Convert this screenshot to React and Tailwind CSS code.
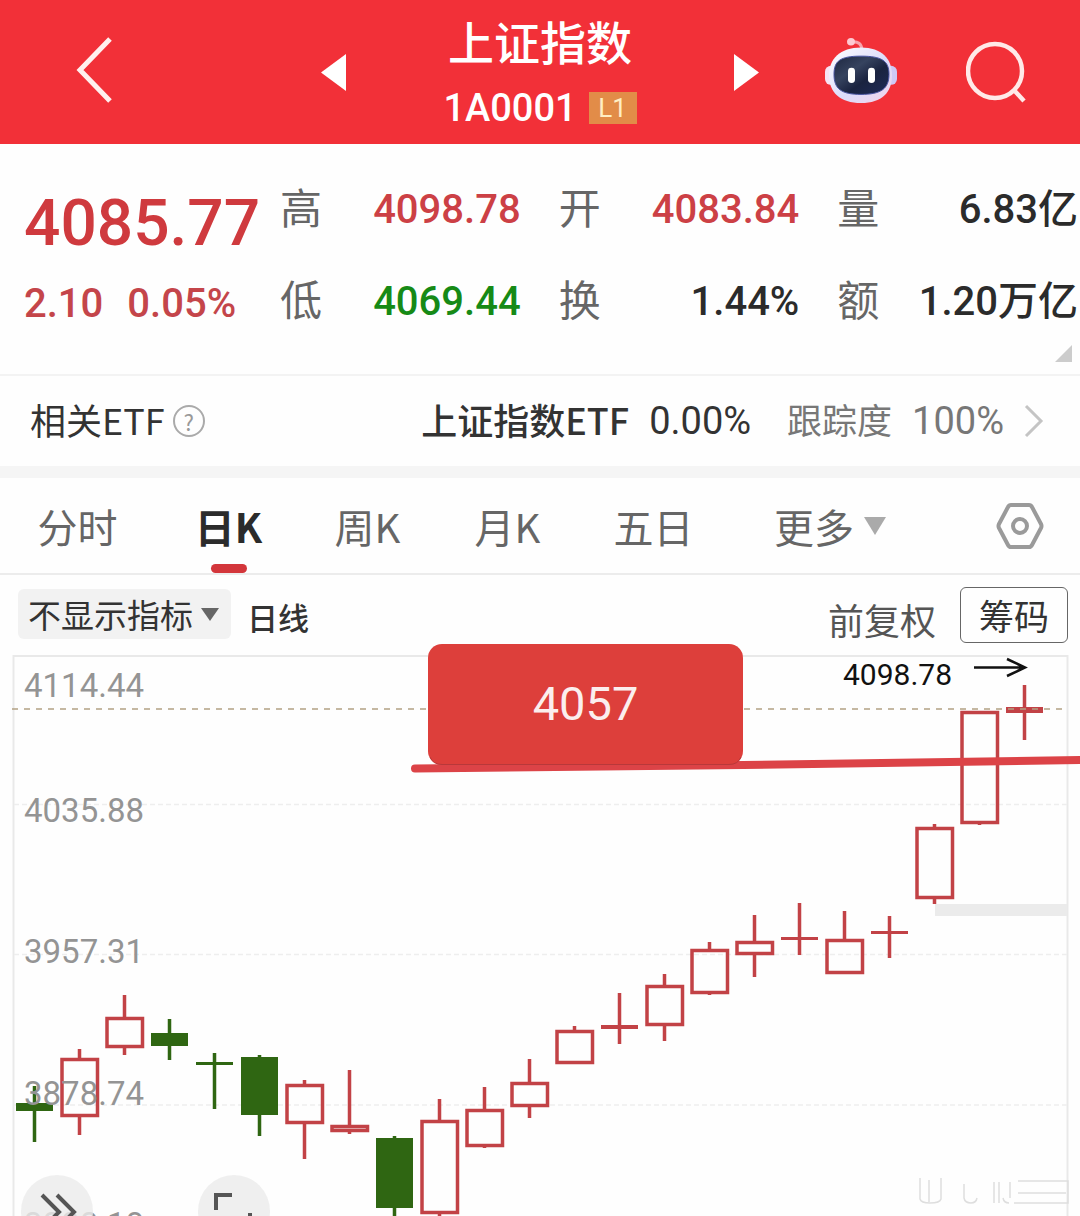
import React from "react";

const NUM = "font-['Roboto','Noto_Sans_CJK_SC',sans-serif]";

const RED = "#c24246";
const GREEN = "#2f6612";

// kind: hollow (rising body), solid (falling body), line (flat body)
const candles = [
  { kind: "solid", top: 1103, bottom: 1111, high: 1086, low: 1142 },
  { kind: "hollow", top: 1058, bottom: 1117, high: 1049, low: 1135 },
  { kind: "hollow", top: 1017, bottom: 1048, high: 995, low: 1055 },
  { kind: "solid", top: 1033, bottom: 1046, high: 1019, low: 1060 },
  { kind: "solid", top: 1062, bottom: 1065, high: 1053, low: 1109 },
  { kind: "solid", top: 1057, bottom: 1115, high: 1055, low: 1136 },
  { kind: "hollow", top: 1084, bottom: 1124, high: 1080, low: 1159 },
  { kind: "hollow", top: 1125, bottom: 1132, high: 1070, low: 1134 },
  { kind: "solid", top: 1138, bottom: 1208, high: 1136, low: 1216 },
  { kind: "hollow", top: 1120, bottom: 1214, high: 1099, low: 1216 },
  { kind: "hollow", top: 1109, bottom: 1147, high: 1087, low: 1148 },
  { kind: "hollow", top: 1082, bottom: 1107, high: 1059, low: 1118 },
  { kind: "hollow", top: 1030, bottom: 1064, high: 1026, low: 1064 },
  { kind: "line", top: 1025, bottom: 1029, high: 993, low: 1044 },
  { kind: "hollow", top: 985, bottom: 1026, high: 974, low: 1041 },
  { kind: "hollow", top: 949, bottom: 994, high: 942, low: 995 },
  { kind: "hollow", top: 941, bottom: 955, high: 915, low: 977 },
  { kind: "line", top: 937, bottom: 940, high: 903, low: 955 },
  { kind: "hollow", top: 939, bottom: 974, high: 911, low: 974 },
  { kind: "line", top: 931, bottom: 934, high: 916, low: 958 },
  { kind: "hollow", top: 827, bottom: 899, high: 824, low: 904 },
  { kind: "hollow", top: 711, bottom: 824, high: 711, low: 825 },
  { kind: "line", top: 707, bottom: 713, high: 685, low: 740 },
];

function Candle({ data, x }) {
  const { kind, top, bottom, high, low } = data;
  const color = kind === "solid" ? GREEN : RED;
  return (
    <g>
      <path d={`M${x} ${high}V${top}M${x} ${bottom}V${low}`} stroke={color} strokeWidth="3.5" />
      {kind === "hollow" && (
        <rect x={x - 17.5} y={top + 1.5} width="35.5" height={bottom - top - 3} fill="none" stroke={RED} strokeWidth="3.5" />
      )}
      {kind !== "hollow" && <rect x={x - 18.5} y={top} width="37" height={bottom - top} fill={color} />}
    </g>
  );
}

function Chart() {
  return (
    <svg viewBox="0 655 1080 561" className="block w-full overflow-visible" role="img" aria-label="日K线图">
      <path d="M13.5 1216V656H1067.5V1216" fill="none" stroke="#e9e9e9" strokeWidth="2" />
      <g stroke="#eeeeee" strokeWidth="1.5" strokeDasharray="5 3">
        <path d="M14 804.5H1067M14 954.5H1067M14 1105H1067" />
      </g>
      <rect x="935" y="904" width="132" height="12" fill="#ebebeb" />
      {candles.map((c, i) => (
        <Candle key={i} data={c} x={34.5 + i * 45} />
      ))}
      <path d="M12 709H1063" stroke="#b3a184" strokeWidth="1.5" strokeDasharray="6 6" />

      <g className={NUM} fontSize="33" fill="#949494">
        <text x="24" y="697">4114.44</text>
        <text x="24" y="822">4035.88</text>
        <text x="24" y="963">3957.31</text>
        <text x="24" y="1105">3878.74</text>
      </g>
      <svg x="0" y="1180" width="1080" height="36" overflow="hidden">
        <text className={NUM} x="24" y="56" fontSize="33" fill="#949494">3800.18</text>
      </svg>

      <text x="843" y="685" fontSize="30" className="font-['Roboto',sans-serif]" fill="#111">4098.78</text>
      <path d="M974 667.5H1024M1007 659L1025 667.5L1007 676" fill="none" stroke="#111" strokeWidth="2.5" />

      <path d="M415 768.5L743 765L1080 760" fill="none" stroke="#dc4347" strokeWidth="8" strokeLinecap="round" strokeLinejoin="round" />
      <rect x="428" y="644" width="315" height="121" rx="14" fill="#dd3f3b" />
      <path d="M430 757Q433 764.500 442 764.500H729Q738 764.500 741 757" fill="none" stroke="#b8383a" strokeWidth="1" />
      <text x="585.5" y="720" fontSize="47" textAnchor="middle" className="font-['Roboto',sans-serif]" fill="#fbeeee">4057</text>

      <g fill="none" stroke="#dedede" strokeWidth="1.5">
        <path d="M920 1178V1199Q921 1203 930 1203Q940 1203 941 1199V1178M929 1180V1202" />
        <path d="M964 1184V1198Q965 1203 971 1203Q976 1203 977 1198M994 1182V1203M999 1182V1203M1003 1198Q1004 1203 1009 1203M1010 1182V1198" />
        <path d="M1014 1203H1068V1181H1018M1018 1193H1066" />
      </g>
    </svg>
  );
}

function Robot() {
  return (
    <svg viewBox="0 0 72 70" preserveAspectRatio="none" className="h-[67px] w-[72px]" aria-hidden="true">
      <defs>
        <linearGradient id="shell" x1="0" y1="0" x2="1" y2="1">
          <stop offset="0" stopColor="#fff" />
          <stop offset="0.55" stopColor="#dcdcfa" />
          <stop offset="1" stopColor="#f3d3ea" />
        </linearGradient>
        <linearGradient id="face" x1="0" y1="0" x2="1" y2="1">
          <stop offset="0" stopColor="#1d2740" />
          <stop offset="0.35" stopColor="#36435f" />
          <stop offset="0.6" stopColor="#1a2340" />
          <stop offset="1" stopColor="#1f2a58" />
        </linearGradient>
      </defs>
      <path d="M27 5Q36 4 37 13" fill="none" stroke="#f7a3ac" strokeWidth="3" />
      <circle cx="26" cy="5" r="4" fill="#fdc9d2" />
      <rect x="0" y="30" width="12" height="20" rx="6" fill="#f7e3f3" />
      <rect x="60" y="30" width="12" height="20" rx="6" fill="#cfc8f5" />
      <path d="M36 11C57 11 67 23 67 40C67 58 57 69 36 69C15 69 4 58 4 40C4 23 15 11 36 11Z" fill="url(#shell)" />
      <path d="M36 20C57 20 64 25 64 39C64 54 56 60 36 60C16 60 9 54 9 39C9 25 15 20 36 20Z" fill="url(#face)" stroke="#4652a0" strokeWidth="1" />
      <rect x="23" y="32" width="7" height="16" rx="3.500" fill="#fff" />
      <rect x="43" y="32" width="7" height="16" rx="3.500" fill="#fff" />
    </svg>
  );
}

function Header() {
  return (
    <header className="grid h-36 grid-cols-[321px_1fr_321px] items-center bg-[#f23038] text-white">
      <button type="button" aria-label="返回" className="ml-[76px] w-9 pb-1">
        <svg viewBox="0 0 36 66" className="h-[66px] w-9" fill="none" stroke="#fff0ee" strokeWidth="5">
          <path d="M34 2L4 33L34 64" />
        </svg>
      </button>
      <div className="flex items-center justify-between">
        <button type="button" aria-label="上一个">
          <svg viewBox="0 0 25 37" className="h-[37px] w-[25px]" fill="#fff"><path d="M25 0V37L0 18.500Z" /></svg>
        </button>
        <div className="flex flex-col items-center">
          <h1 className="text-[46px] leading-[72px] font-medium">上证指数</h1>
          <div className="flex items-center gap-3">
            <span className={`text-[38px] leading-[64px] font-medium ${NUM}`}>1A0001</span>
            <span className={`flex h-8 w-12 items-center justify-center bg-[#e28c48] text-[26px] leading-8 text-[#ffeec4] ${NUM}`}>L1</span>
          </div>
        </div>
        <button type="button" aria-label="下一个">
          <svg viewBox="0 0 25 37" className="h-[37px] w-[25px]" fill="#fff"><path d="M0 0V37L25 18.500Z" /></svg>
        </button>
      </div>
      <div className="flex items-center justify-between pr-[54px] pl-[66px]">
        <button type="button" aria-label="智能助手" className="pb-1"><Robot /></button>
        <button type="button" aria-label="搜索">
          <svg viewBox="0 0 60 62" className="h-[62px] w-[60px]" fill="none" stroke="#ffe9e8" strokeWidth="4.500">
            <circle cx="29" cy="30" r="27" />
            <path d="M47 48L58 60" />
          </svg>
        </button>
      </div>
    </header>
  );
}

const stats = [
  ["高", "4098.78", "text-[#cc4045]"],
  ["开", "4083.84", "text-[#cc4045]"],
  ["量", "6.83亿", "text-[#2b2b2b]"],
  ["低", "4069.44", "text-[#168a16]"],
  ["换", "1.44%", "text-[#2b2b2b]"],
  ["额", "1.20万亿", "text-[#2b2b2b]"],
];

function Quote() {
  return (
    <section className="relative flex h-[232px] border-b-2 border-[#f3f3f3]">
      <div className="w-[280px] shrink-0 pt-10 pl-6 text-[#cf3a3e]">
        <div className={`text-[64px] leading-[80px] font-medium ${NUM}`}>4085.77</div>
        <div className={`flex gap-6 text-[40px] leading-[80px] font-medium text-[#c4454a] ${NUM}`}>
          <span>2.10</span>
          <span>0.05%</span>
        </div>
      </div>
      <dl className="grid flex-1 grid-cols-3 content-start gap-x-[38px] gap-y-10 pt-10 pr-0.5">
        {stats.map(([label, value, color]) => (
          <div key={label} className="flex h-[52px] items-center justify-between whitespace-nowrap">
            <dt className="pb-2 text-[42px] leading-[52px] text-[#666]">{label}</dt>
            <dd className={`text-[40px] leading-[52px] font-medium ${NUM} ${color}`}>{value}</dd>
          </div>
        ))}
      </dl>
      <svg viewBox="0 0 17 17" className="absolute right-2 bottom-3 size-[17px]" fill="#ccc" aria-hidden="true"><path d="M17 0V17H0Z" /></svg>
    </section>
  );
}

function EtfRow() {
  return (
    <section className="flex h-[102px] items-center border-b-12 border-[#f5f5f5] pr-9 pl-[30px] text-[36px] whitespace-nowrap text-[#333]">
      <span className="pb-1">相关ETF</span>
      <button type="button" aria-label="说明" className="ml-2 flex size-8 items-center justify-center rounded-full border-2 border-[#aaa] text-[22px] leading-none text-[#999]">?</button>
      <a href="#etf" className="ml-auto flex items-center">
        <span className="pb-1 font-medium">上证指数ETF</span>
        <span className={`ml-5 text-[38px] ${NUM}`}>0.00%</span>
        <span className="ml-9 pb-1 text-[35px] text-[#777]">跟踪度</span>
        <span className={`ml-5 text-[38px] text-[#777] ${NUM}`}>100%</span>
        <svg viewBox="0 0 20 34" className="ml-5 h-[34px] w-5" fill="none" stroke="#c4c4c4" strokeWidth="3" aria-hidden="true"><path d="M2 2L17 17L2 32" /></svg>
      </a>
    </section>
  );
}

function Tabs() {
  return (
    <nav className="grid h-[97px] grid-cols-[155fr_147fr_131fr_149fr_143fr_210fr_145fr] border-b-2 border-[#ececec] text-[40px] whitespace-nowrap text-[#666]">
      <button type="button">分时</button>
      <button type="button" aria-current="page" className="relative font-bold text-[#2b2b2b]">
        日K
        <span className="absolute bottom-0 left-1/2 h-[9px] w-9 -translate-x-1/2 rounded-full bg-[#d3363b]" />
      </button>
      <button type="button">周K</button>
      <button type="button">月K</button>
      <button type="button">五日</button>
      <button type="button" aria-haspopup="menu" className="flex items-center justify-center gap-2.5">
        更多
        <svg viewBox="0 0 22 18" className="h-[18px] w-[22px]" fill="#aaa"><path d="M0 0H22L11 18Z" /></svg>
      </button>
      <button type="button" aria-label="设置" className="flex items-center justify-end pr-9">
        <svg viewBox="0 0 48 48" className="size-12" fill="none" stroke="#9a9a9a" strokeWidth="4" strokeLinejoin="round">
          <path d="M15 3H33Q35 3 36 5L45 22Q46 24 45 26L36 43Q35 45 33 45H15Q13 45 12 43L3 26Q2 24 3 22L12 5Q13 3 15 3Z" />
          <circle cx="24" cy="24" r="7" />
        </svg>
      </button>
    </nav>
  );
}

function Toolbar() {
  return (
    <div className="flex h-20 items-start pt-3 pr-3 pl-[18px] text-[#333]">
      <label className="relative mt-0.5 flex h-[50px] w-[213px] items-center rounded-md bg-[#f2f2f2]">
        <select aria-label="指标" className="w-full appearance-none bg-transparent pl-2.5 text-[33px] leading-[50px]">
          <option>不显示指标</option>
        </select>
        <svg viewBox="0 0 18 13" className="pointer-events-none absolute right-3 h-[13px] w-[18px]" fill="#666" aria-hidden="true"><path d="M0 0H18L9 13Z" /></svg>
      </label>
      <span className="ml-4 text-[31px] leading-[60px] font-medium">日线</span>
      <button type="button" className="ml-auto text-[36px] leading-[64px] text-[#555]">前复权</button>
      <button type="button" className="ml-6 h-14 w-[108px] rounded-md border border-[#666] text-[35px] leading-[54px]">筹码</button>
    </div>
  );
}

export default function App() {
  return (
    <main className="w-full bg-[#fefefe] font-['Noto_Sans_CJK_SC',sans-serif]">
      <Header />
      <Quote />
      <EtfRow />
      <Tabs />
      <Toolbar />
      <div className="relative">
        <Chart />
        <div className="absolute inset-x-0 bottom-0 h-12 overflow-hidden">
          <button type="button" aria-label="展开" className="absolute top-[7px] left-[21px] flex size-[72px] items-center justify-center rounded-full bg-[#ebebeb]/80">
            <svg viewBox="0 0 72 72" className="size-[72px]" fill="none" stroke="#555" strokeWidth="4"><path d="M21 20L38 37L21 54M36 20L53 37L36 54" /></svg>
          </button>
          <button type="button" aria-label="全屏" className="absolute top-[7px] left-[198px] flex size-[72px] items-center justify-center rounded-full bg-[#ebebeb]/80">
            <svg viewBox="0 0 72 72" className="size-[72px]" fill="none" stroke="#555" strokeWidth="4"><path d="M18 35V20H34M52 38V53H36" /></svg>
          </button>
        </div>
      </div>
    </main>
  );
}
